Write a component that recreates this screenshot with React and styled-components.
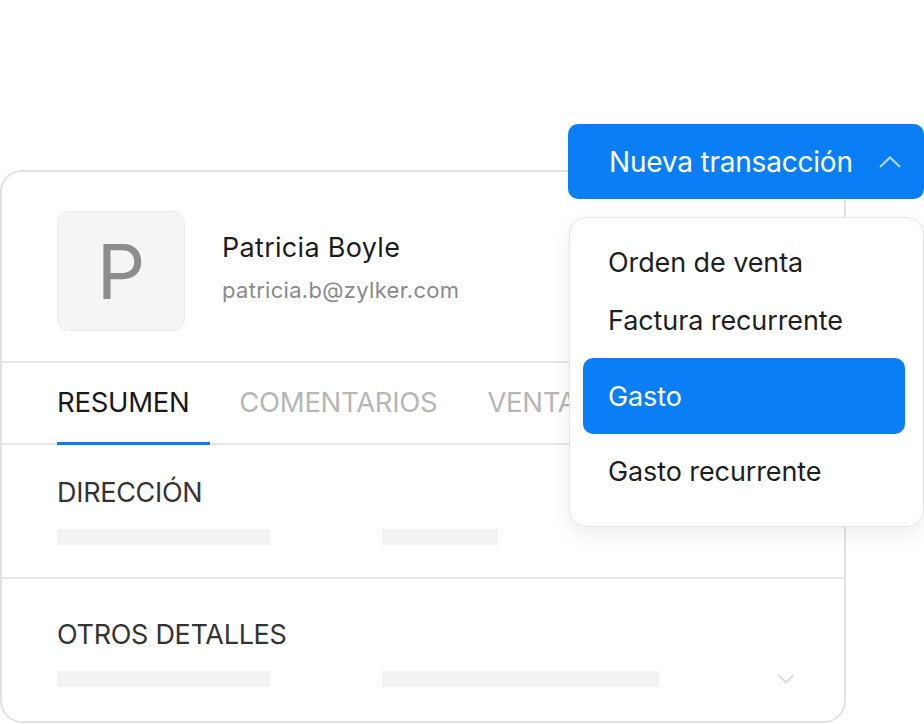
import React from 'react';
import styled, { createGlobalStyle } from 'styled-components';

const GlobalStyle = createGlobalStyle`
  * { box-sizing: border-box; }
  html, body {
    margin: 0;
    padding: 0;
    background: #ffffff;
    font-family: Inter, "Noto Sans", "Liberation Sans", sans-serif;
    -webkit-font-smoothing: antialiased;
  }
`;

const Stage = styled.div`
  position: relative;
  width: 924px;
  height: 724px;
  padding: 170px 0 0 0;
  overflow: hidden;
`;

const Card = styled.div`
  width: 846px;
  height: 553px;
  border: 2px solid #e2e2e2;
  border-radius: 22px;
  background: #fff;
  overflow: hidden;
`;

const Header = styled.div`
  display: flex;
  align-items: center;
  gap: 37px;
  padding: 39px 0 30px 55px;
  border-bottom: 2px solid #e6e6e6;
`;

const Avatar = styled.div`
  width: 128px;
  height: 120px;
  display: flex;
  align-items: center;
  justify-content: center;
  background: #f5f5f5;
  border: 1px solid #ececec;
  border-radius: 12px;
  color: #8d8d8d;
  font-size: 76px;
  font-weight: 400;
  line-height: 1;
`;

const Info = styled.div`
  display: flex;
  flex-direction: column;
  gap: 14px;
  padding-bottom: 6px;
`;

const Name = styled.div`
  font-size: 27px;
  line-height: 30px;
  letter-spacing: 0.3px;
  color: #1c1c1c;
`;

const Email = styled.div`
  font-size: 22px;
  line-height: 26px;
  letter-spacing: 0.3px;
  color: #8a8a8a;
`;

const Tabs = styled.div`
  display: flex;
  gap: 29px;
  padding-left: 55px;
  border-bottom: 2px solid #e6e6e6;
  white-space: nowrap;
`;

const Tab = styled.div`
  padding: 24px 21px 25px 0;
  font-size: 27.5px;
  line-height: 30px;
  letter-spacing: -0.3px;
  color: ${p => (p.active ? '#1a1a1a' : '#b6b6b6')};
  border-bottom: 3px solid ${p => (p.active ? '#0a7ff5' : 'transparent')};
  margin-bottom: -2px;
`;

const Section = styled.div`
  padding: ${p => p.top}px 49px ${p => p.bottom}px 55px;
  border-bottom: ${p => (p.last ? 'none' : '2px solid #e6e6e6')};
`;

const Heading = styled.div`
  font-size: 27px;
  line-height: 30px;
  letter-spacing: -0.3px;
  color: #343434;
`;

const BarRow = styled.div`
  display: flex;
  align-items: center;
  gap: 112px;
  margin-top: 21px;
  height: 16px;
`;

const Bar = styled.div`
  width: ${p => p.w}px;
  height: 16px;
  background: #f3f3f3;
`;

const Caret = styled.svg`
  margin-left: auto;
  flex-shrink: 0;
`;

const Menu = styled.div`
  position: absolute;
  top: 124px;
  left: 568px;
  width: 356px;
  display: flex;
  flex-direction: column;
  gap: 18px;
`;

const NewButton = styled.div`
  height: 75px;
  display: flex;
  align-items: center;
  justify-content: space-between;
  padding: 0 22px 0 41px;
  background: #0a7ff5;
  border-radius: 10px;
  color: #fff;
  font-size: 28px;
  letter-spacing: -0.2px;
`;

const Dropdown = styled.div`
  margin-left: 1px;
  padding: 15px 18px 26px 13px;
  background: #fff;
  border: 1.5px solid #e4e4e4;
  border-radius: 18px;
  box-shadow: 0 8px 22px rgba(0, 0, 0, 0.07);
`;

const Item = styled.div`
  display: flex;
  align-items: center;
  height: ${p => (p.active ? 76 : 58)}px;
  margin: ${p => (p.active ? '9px 0 8px' : '0')};
  padding-left: 25px;
  border-radius: 10px;
  background: ${p => (p.active ? '#0a7ff5' : 'transparent')};
  color: ${p => (p.active ? '#fff' : '#1f1f1f')};
  font-size: 27px;
  letter-spacing: -0.1px;
`;

const options = ['Orden de venta', 'Factura recurrente', 'Gasto', 'Gasto recurrente'];

const App = () => (
  <>
    <GlobalStyle />
    <Stage>
      <Card>
        <Header>
          <Avatar>P</Avatar>
          <Info>
            <Name>Patricia Boyle</Name>
            <Email>patricia.b@zylker.com</Email>
          </Info>
        </Header>
        <Tabs>
          <Tab active>RESUMEN</Tab>
          <Tab>COMENTARIOS</Tab>
          <Tab>VENTAS</Tab>
        </Tabs>
        <Section top={33} bottom={32}>
          <Heading>DIRECCIÓN</Heading>
          <BarRow>
            <Bar w={213} />
            <Bar w={116} />
          </BarRow>
        </Section>
        <Section top={41} bottom={38} last>
          <Heading>OTROS DETALLES</Heading>
          <BarRow>
            <Bar w={213} />
            <Bar w={277} />
            <Caret width="18" height="12" viewBox="0 0 18 12">
              <path d="M1.5 2 L9 9.5 L16.5 2" fill="none" stroke="#dcdcdc" strokeWidth="2" />
            </Caret>
          </BarRow>
        </Section>
      </Card>

      <Menu>
        <NewButton>
          <span>Nueva transacción</span>
          <svg width="24" height="14" viewBox="0 0 24 14">
            <path d="M2 12 L12 2.5 L22 12" fill="none" stroke="rgba(255,255,255,0.7)" strokeWidth="2" />
          </svg>
        </NewButton>
        <Dropdown>
          {options.map(o => (
            <Item key={o} active={o === 'Gasto'}>{o}</Item>
          ))}
        </Dropdown>
      </Menu>
    </Stage>
  </>
);

export default App;
